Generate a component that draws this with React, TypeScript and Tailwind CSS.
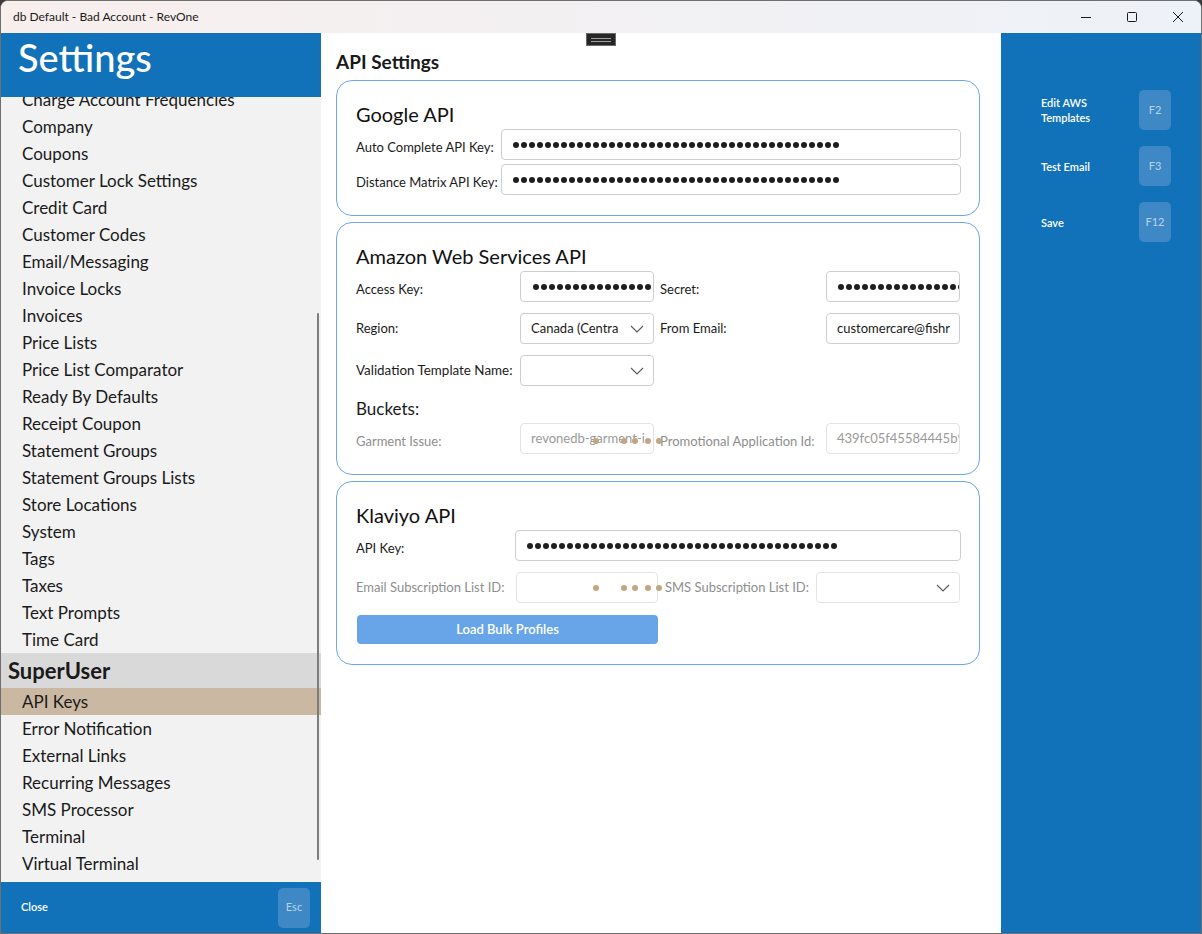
import React from "react";

const sideItems = [
  "Company",
  "Coupons",
  "Customer Lock Settings",
  "Credit Card",
  "Customer Codes",
  "Email/Messaging",
  "Invoice Locks",
  "Invoices",
  "Price Lists",
  "Price List Comparator",
  "Ready By Defaults",
  "Receipt Coupon",
  "Statement Groups",
  "Statement Groups Lists",
  "Store Locations",
  "System",
  "Tags",
  "Taxes",
  "Text Prompts",
  "Time Card",
];

const superItems = [
  "Error Notification",
  "External Links",
  "Recurring Messages",
  "SMS Processor",
  "Terminal",
  "Virtual Terminal",
];

function Dots({ n }: { n: number }) {
  return (
    <div className="flex gap-[2px] shrink-0">
      {Array.from({ length: n }).map((_, i) => (
        <span key={i} className="w-[6px] h-[6px] rounded-full bg-[#1e1e1e] shrink-0" />
      ))}
    </div>
  );
}

function Chevron() {
  return (
    <svg width="14" height="8" viewBox="0 0 14 8" className="shrink-0">
      <polyline points="1,1 7,7 13,1" fill="none" stroke="#5a5a5a" strokeWidth="1.1" />
    </svg>
  );
}

function Box({ children, disabled, className = "" }: { children?: React.ReactNode; disabled?: boolean; className?: string }) {
  return (
    <div
      className={`h-[31px] border rounded-[4px] flex items-center overflow-hidden bg-white ${
        disabled ? "border-[#e3e3e6]" : "border-[#cdcdd4]"
      } ${className}`}
    >
      {children}
    </div>
  );
}

function Loader({ top }: { top: number }) {
  const xs = [0, 27.7, 39, 51.7, 63.3];
  return (
    <div className="absolute left-[237px] h-[6px] w-[70px] pointer-events-none" style={{ top }}>
      {xs.map((x, i) => (
        <span
          key={i}
          className="absolute w-[6px] h-[6px] rounded-full bg-[#c2a680]"
          style={{ left: x }}
        />
      ))}
    </div>
  );
}

function Card({ title, children }: { title: string; children: React.ReactNode }) {
  return (
    <div className="border border-[#6ea6e8] rounded-[16px] pl-[19px] pr-[18px] pt-[19px] pb-[20px]">
      <div className="text-[20px] leading-[28px] text-[#111]">{title}</div>
      {children}
    </div>
  );
}

export default function App() {
  return (
    <div className="w-[1202px] h-[934px] bg-[#3a3a3a] font-[Lato,sans-serif] text-[#1a1a1a]">
      <div className="w-[1202px] h-[934px] flex flex-col border border-[#6f6f6f] rounded-t-[8px] overflow-hidden bg-white">
        {/* Title bar */}
        <div className="h-[32px] shrink-0 flex items-center bg-gradient-to-r from-[#f8efed] to-[#edf2f8]">
          <div className="pl-[12px] text-[12px] text-[#1a1a1a] flex-1">db Default - Bad Account - RevOne</div>
          <div className="flex items-center h-full">
            <div className="w-[46px] h-full flex items-center justify-center">
              <svg width="12" height="12" viewBox="0 0 12 12">
                <line x1="1" y1="6.5" x2="11" y2="6.5" stroke="#1a1a1a" strokeWidth="1" />
              </svg>
            </div>
            <div className="w-[46px] h-full flex items-center justify-center">
              <svg width="12" height="12" viewBox="0 0 12 12">
                <rect x="1.5" y="1.5" width="9" height="9" rx="1" fill="none" stroke="#1a1a1a" strokeWidth="1" />
              </svg>
            </div>
            <div className="w-[46px] h-full flex items-center justify-center">
              <svg width="12" height="12" viewBox="0 0 12 12">
                <line x1="1" y1="1" x2="11" y2="11" stroke="#1a1a1a" strokeWidth="1" />
                <line x1="11" y1="1" x2="1" y2="11" stroke="#1a1a1a" strokeWidth="1" />
              </svg>
            </div>
          </div>
        </div>

        {/* Body */}
        <div className="flex flex-1 min-h-0">
          {/* Sidebar */}
          <div className="w-[320px] shrink-0 flex flex-col bg-[#f2f2f2]">
            <div className="h-[64px] shrink-0 bg-[#1172b9] flex items-center pl-[17px] relative z-10">
              <span className="text-[38px] leading-none text-white font-medium pb-[16px]">Settings</span>
            </div>
            <div className="flex-1 min-h-0 overflow-hidden relative">
              <div className="-mt-[11px]">
                <div className="h-[27px] flex items-center pl-[21px] text-[17px]">Charge Account Frequencies</div>
                {sideItems.map((s) => (
                  <div key={s} className="h-[27px] flex items-center pl-[21px] text-[17px]">
                    {s}
                  </div>
                ))}
                <div className="h-[35px] flex items-center pl-[7px] text-[22px] font-bold bg-[#d9d9d9]">SuperUser</div>
                <div className="h-[27px] flex items-center pl-[21px] text-[17px] bg-[#cbb8a3]">API Keys</div>
                {superItems.map((s) => (
                  <div key={s} className="h-[27px] flex items-center pl-[21px] text-[17px]">
                    {s}
                  </div>
                ))}
              </div>
              <div className="absolute right-[2px] top-[216px] w-[2px] h-[547px] bg-[#7d7d7d] rounded-full" />
            </div>
            <div className="h-[51px] shrink-0 bg-[#1172b9] flex items-center pl-[20px] pr-[11px]">
              <span className="flex-1 text-[11px] font-semibold text-white">Close</span>
              <div className="w-[32px] h-[40px] rounded-[5px] bg-[#3f88c6] flex items-center justify-center text-[11px] text-[#b9d3ec]">
                Esc
              </div>
            </div>
          </div>

          {/* Main */}
          <div className="w-[680px] shrink-0 relative pl-[15px] pr-[21px] pt-[16px]">
            <div className="absolute left-[265px] top-0 w-[30px] h-[13px] bg-[#262626] border border-[#6a6a6a] flex flex-col items-center justify-center gap-[2px]">
              <span className="w-[20px] h-[1px] bg-[#a0a0a0]" />
              <span className="w-[20px] h-[1px] bg-[#a0a0a0]" />
            </div>
            <div className="text-[19px] font-bold leading-[26px] mb-[5px]">API Settings</div>

            <div className="flex flex-col gap-[6px]">
              <Card title="Google API">
                <div className="grid grid-cols-[145px_1fr] gap-y-[4px] items-center mt-[1px] text-[13px]">
                  <div className="pt-[7px]">Auto Complete API Key:</div>
                  <Box className="px-[11px]">
                    <Dots n={41} />
                  </Box>
                  <div className="pt-[7px]">Distance Matrix API Key:</div>
                  <Box className="px-[11px]">
                    <Dots n={41} />
                  </Box>
                </div>
              </Card>

              <Card title="Amazon Web Services API">
                <div className="grid grid-cols-[164px_134px_172px_134px] items-center mt-[1px] text-[13px]">
                  <div className="pt-[7px]">Access Key:</div>
                  <Box className="pl-[12px]">
                    <Dots n={16} />
                  </Box>
                  <div className="pl-[6px] pt-[7px]">Secret:</div>
                  <Box className="pl-[11px]">
                    <Dots n={16} />
                  </Box>

                  <div className="mt-[11px]">Region:</div>
                  <Box className="mt-[11px] pl-[10px] pr-[9px] justify-between">
                    <span className="whitespace-nowrap overflow-hidden">Canada (Centra</span>
                    <Chevron />
                  </Box>
                  <div className="mt-[11px] pl-[6px] pt-[1px]">From Email:</div>
                  <Box className="mt-[11px] pl-[10px]">
                    <span className="whitespace-nowrap">customercare@fishr</span>
                  </Box>

                  <div className="mt-[11px] text-[13.4px]">Validation Template Name:</div>
                  <Box className="mt-[11px] pl-[10px] pr-[9px] justify-end">
                    <Chevron />
                  </Box>
                  <div className="mt-[11px]" />
                  <div className="mt-[11px]" />
                </div>
                <div className="mt-[10px] h-[26px] flex items-center text-[17px]">Buckets:</div>
                <div className="grid grid-cols-[164px_134px_172px_134px] items-center mt-[1px] text-[13px] relative">
                  <div className="pt-[7px] text-[#8e8e8e]">Garment Issue:</div>
                  <Box disabled className="pl-[10px]">
                    <span className="whitespace-nowrap text-[#9a9a9a]">revonedb-garment-i</span>
                  </Box>
                  <div className="pl-[6px] pt-[7px] text-[#8e8e8e] whitespace-nowrap">Promotional Application Id:</div>
                  <Box disabled className="pl-[10px]">
                    <span className="whitespace-nowrap text-[#9a9a9a]">439fc05f45584445b9</span>
                  </Box>
                  <Loader top={15} />
                </div>
              </Card>

              <Card title="Klaviyo API">
                <div className="grid grid-cols-[159px_1fr] items-center mt-[1px] text-[13px]">
                  <div className="pt-[6px]">API Key:</div>
                  <Box className="pl-[11px]">
                    <Dots n={39} />
                  </Box>
                </div>
                <div className="grid grid-cols-[160px_142px_158px_144px] items-center mt-[11px] text-[13px] relative">
                  <div className="text-[#8e8e8e]">Email Subscription List ID:</div>
                  <Box disabled />
                  <div className="pl-[7px] text-[#8e8e8e] whitespace-nowrap">SMS Subscription List ID:</div>
                  <Box disabled className="pr-[9px] justify-end">
                    <Chevron />
                  </Box>
                  <Loader top={13} />
                </div>
                <div className="mt-[12px] w-[301px] ml-[1px] h-[29px] rounded-[4px] bg-[#68a5e8] flex items-center justify-center text-[13px] font-semibold text-white">
                  Load Bulk Profiles
                </div>
              </Card>
            </div>
          </div>

          {/* Right panel */}
          <div className="flex-1 bg-[#1172b9] pt-[57px] pl-[40px] pr-[30px] flex flex-col gap-[16px]">
            {[
              ["Edit AWS", "Templates", "F2"],
              ["Test Email", "", "F3"],
              ["Save", "", "F12"],
            ].map(([a, b, k]) => (
              <div key={k} className="flex items-center h-[40px]">
                <div className="flex-1 text-[11px] font-semibold leading-[15px] text-white">
                  <div>{a}</div>
                  {b && <div>{b}</div>}
                </div>
                <div className="w-[32px] h-[40px] rounded-[5px] bg-[#3f88c6] flex items-center justify-center text-[11px] text-[#b9d3ec]">
                  {k}
                </div>
              </div>
            ))}
          </div>
        </div>
      </div>
    </div>
  );
}
